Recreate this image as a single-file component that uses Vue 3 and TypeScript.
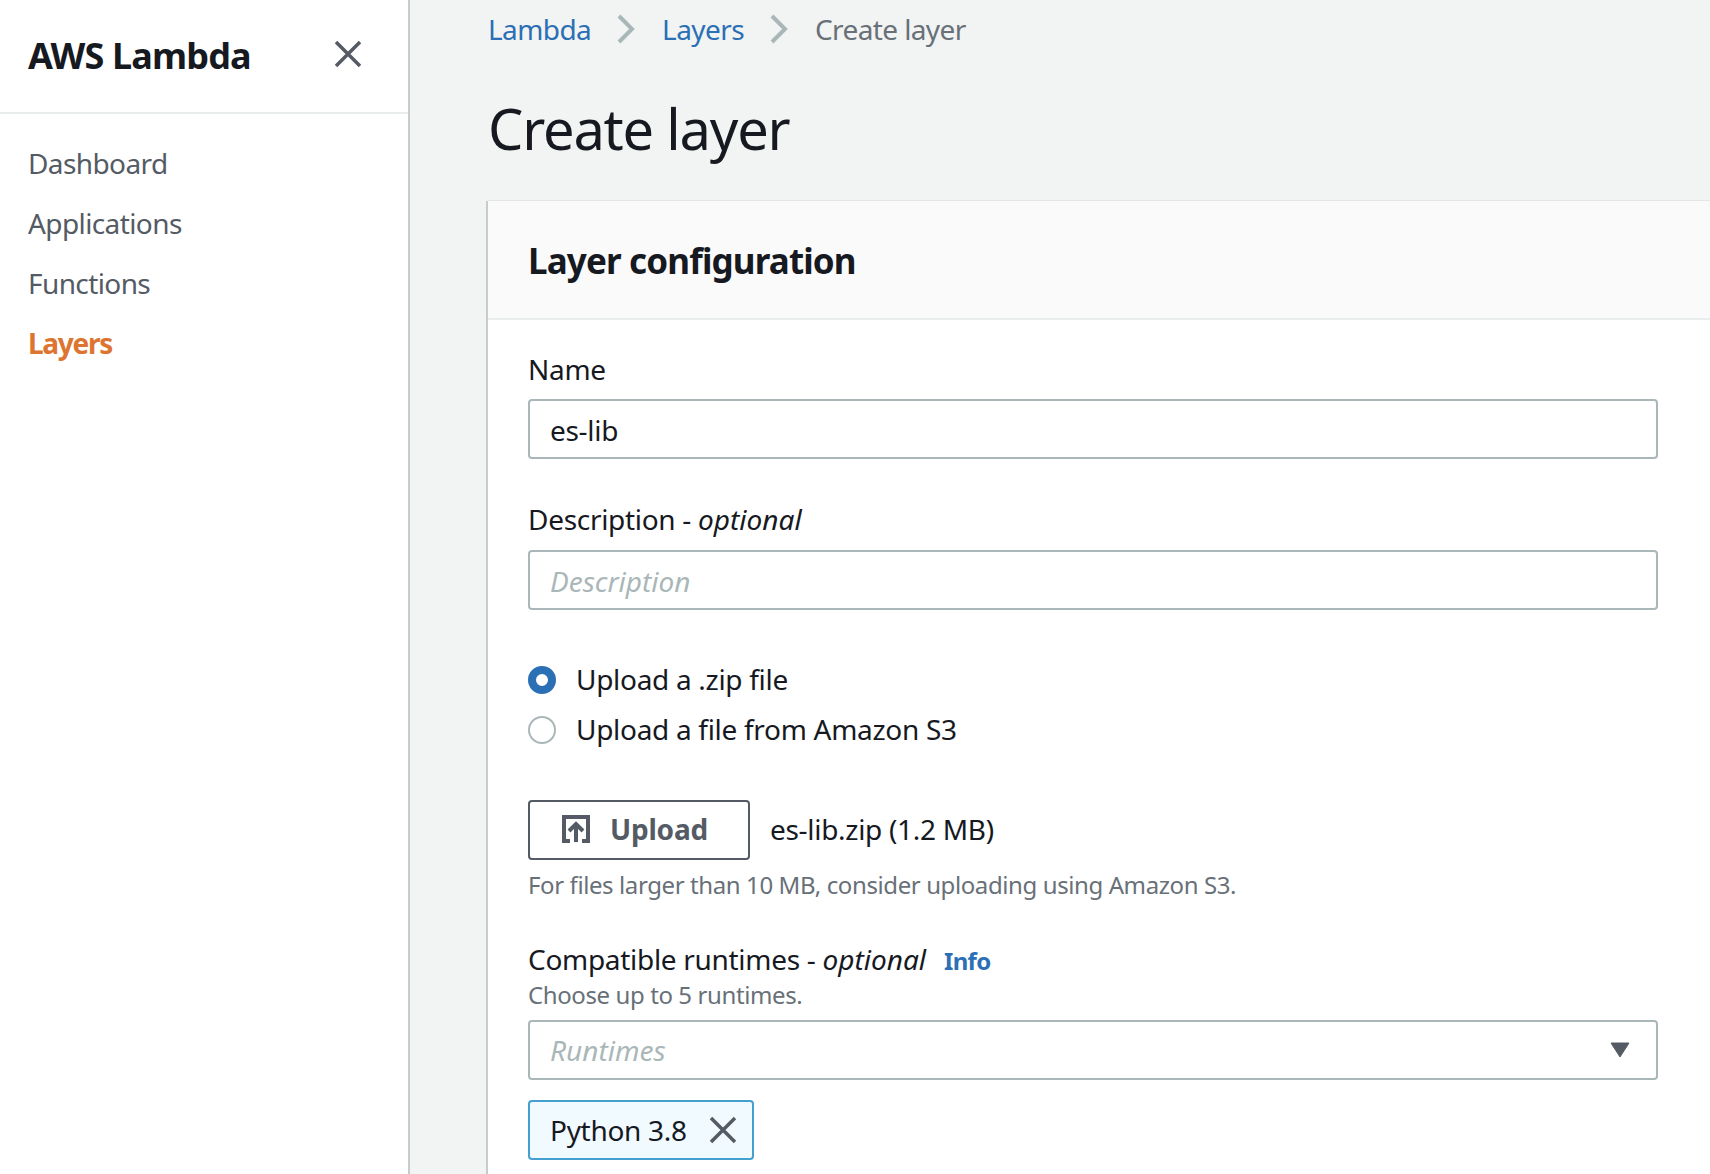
<template>
  <div class="page">
    <aside class="sidebar">
      <div class="side-head">
        <span class="side-title">AWS Lambda</span>
        <svg class="close-icon" width="28" height="28" viewBox="0 0 28 28">
          <path d="M2 2 L26 26 M26 2 L2 26" />
        </svg>
      </div>
      <nav class="side-nav">
        <a v-for="item in navItems" :key="item" class="nav-item" :class="{ active: item === 'Layers' }">{{ item }}</a>
      </nav>
    </aside>

    <main class="main">
      <div class="crumbs">
        <a class="link">Lambda</a>
        <svg class="crumb-sep" width="18" height="30" viewBox="0 0 18 30"><path d="M2 2 L15 15 L2 28" /></svg>
        <a class="link">Layers</a>
        <svg class="crumb-sep" width="18" height="30" viewBox="0 0 18 30"><path d="M2 2 L15 15 L2 28" /></svg>
        <span class="crumb-current">Create layer</span>
      </div>
      <h1 class="title">Create layer</h1>

      <section class="card">
        <header class="card-head">Layer configuration</header>
        <div class="card-body">
          <label class="label">Name</label>
          <div class="input">es-lib</div>

          <label class="label second">Description - <em>optional</em></label>
          <div class="input placeholder">Description</div>

          <div class="radios">
            <div class="radio-row">
              <span class="radio checked"></span>
              <span class="radio-text">Upload a .zip file</span>
            </div>
            <div class="radio-row">
              <span class="radio"></span>
              <span class="radio-text">Upload a file from Amazon S3</span>
            </div>
          </div>

          <div class="upload-row">
            <button class="upload-btn">
              <svg width="28" height="28" viewBox="0 0 28 28">
                <path class="upload-frame" d="M8 26 H2 V2 H26 V26 H20" />
                <path class="upload-arrow" d="M14 27 V10 M7 16 L14 9 L21 16" />
              </svg>
              <span>Upload</span>
            </button>
            <span class="file-name">es-lib.zip (1.2 MB)</span>
          </div>
          <p class="hint">For files larger than 10 MB, consider uploading using Amazon S3.</p>

          <label class="label runtimes">Compatible runtimes - <em>optional</em><a class="info">Info</a></label>
          <p class="hint choose">Choose up to 5 runtimes.</p>
          <div class="input placeholder select">
            <span>Runtimes</span>
            <svg width="20" height="16" viewBox="0 0 20 16"><path d="M1 1 H19 L10 15 Z" /></svg>
          </div>

          <div class="chip">
            <span>Python 3.8</span>
            <svg width="28" height="28" viewBox="0 0 28 28"><path d="M2 2 L26 26 M26 2 L2 26" /></svg>
          </div>
        </div>
      </section>
    </main>
  </div>
</template>

<script setup lang="ts">
const navItems: string[] = ['Dashboard', 'Applications', 'Functions', 'Layers']
</script>

<style>
html, body {
  margin: 0;
  background: #f2f3f3;
}
</style>

<style scoped>
.page {
  display: flex;
  height: 1174px;
  overflow: hidden;
  background: #f2f3f3;
  color: #16191f;
  font-family: "Noto Sans", "Open Sans", sans-serif;
  font-size: 28px;
  letter-spacing: -0.6px;
}
.sidebar {
  width: 408px;
  flex: none;
  background: #fff;
  border-right: 2px solid #c6cbcc;
}
.side-head {
  border-bottom: 2px solid #eaeded;
  display: flex;
  align-items: center;
  justify-content: space-between;
  padding: 2px 46px 3px 28px;
  height: 107px;
}
.side-title {
  font-size: 36px;
  font-weight: 700;
  letter-spacing: -0.85px;
}
.close-icon {
  margin-top: -4px;
}
.close-icon path {
  fill: none;
  stroke: #545b64;
  stroke-width: 3.5;
}
.side-nav {
  display: flex;
  flex-direction: column;
  padding-top: 19px;
}
.nav-item {
  height: 60px;
  line-height: 60px;
  padding-left: 28px;
  color: #545b64;
}
.nav-item.active {
  color: #dd7530;
  font-weight: 700;
  letter-spacing: -1.3px;
}
.main {
  flex: 1;
  min-width: 0;
  padding-left: 78px;
  display: flex;
  flex-direction: column;
}
.crumbs {
  display: flex;
  align-items: center;
  height: 58px;
}
.link {
  color: #2b6fb5;
}
.crumb-sep {
  margin: 0 27px 0 26px;
}
.crumb-sep path {
  fill: none;
  stroke: #aab7b8;
  stroke-width: 4;
}
.crumb-current {
  color: #687078;
}
.title {
  margin: 0;
  padding-top: 36px;
  height: 107px;
  font-size: 56px;
  line-height: 68px;
  font-weight: 400;
  letter-spacing: -1.2px;
}
.card {
  flex: 1;
  background: #fff;
  box-shadow: -2px 0 0 #c6cbcc, 0 -1px 0 #e3e6e6;
  letter-spacing: -0.3px;
}
.card-head {
  height: 117px;
  line-height: 119px;
  padding-left: 40px;
  background: #fafafa;
  border-bottom: 2px solid #eaeded;
  font-size: 35px;
  font-weight: 700;
  letter-spacing: -0.85px;
}
.card-body {
  padding: 29px 52px 0 40px;
}
.label {
  display: block;
  height: 40px;
  line-height: 40px;
  margin-bottom: 10px;
}
.label.second {
  margin-top: 40px;
  margin-bottom: 11px;
}
em {
  letter-spacing: 0;
}
.input {
  height: 60px;
  box-sizing: border-box;
  border: 2px solid #aab7b8;
  border-radius: 4px;
  padding: 0 20px;
  line-height: 58px;
  background: #fff;
}
.placeholder {
  color: #aab7b8;
  font-style: italic;
  letter-spacing: 0;
}
.radios {
  margin-top: 45px;
}
.radio-row {
  display: flex;
  align-items: center;
  gap: 20px;
  height: 50px;
}
.radio {
  width: 28px;
  height: 28px;
  box-sizing: border-box;
  border: 2px solid #aab7b8;
  border-radius: 50%;
}
.radio.checked {
  border: 8px solid #2b6fb5;
}
.radio-text {
  margin-top: -2px;
}
.upload-row {
  display: flex;
  align-items: center;
  gap: 20px;
  margin-top: 45px;
}
.file-name {
  margin-top: -2px;
}
.upload-btn {
  display: flex;
  align-items: center;
  gap: 20px;
  width: 222px;
  height: 60px;
  padding: 0 0 2px 32px;
  background: #fff;
  border: 2px solid #545b64;
  border-radius: 4px;
  color: #545b64;
  font: inherit;
  font-weight: 700;
  letter-spacing: -0.2px;
}
.upload-frame {
  fill: none;
  stroke: #545b64;
  stroke-width: 4;
}
.upload-arrow {
  fill: none;
  stroke: #545b64;
  stroke-width: 4;
}
.hint {
  margin: 4px 0 0;
  height: 42px;
  line-height: 42px;
  color: #687078;
  font-size: 24px;
  letter-spacing: -0.4px;
}
.label.runtimes {
  margin-top: 33px;
  margin-bottom: 0;
}
.info {
  margin-left: 18px;
  color: #2b6fb5;
  font-size: 24px;
  font-weight: 700;
  letter-spacing: -0.7px;
}
.hint.choose {
  margin: 1px 0 10px;
  height: 30px;
  line-height: 30px;
}
.select {
  display: flex;
  align-items: center;
  justify-content: space-between;
  padding-right: 26px;
}
.select path {
  fill: #545b64;
  stroke: #545b64;
  stroke-width: 1;
  stroke-linejoin: round;
}
.chip {
  display: inline-flex;
  align-items: center;
  gap: 22px;
  height: 60px;
  box-sizing: border-box;
  margin-top: 20px;
  padding: 0 15px 0 20px;
  background: #f1faff;
  border: 2px solid #44a1cf;
  border-radius: 4px;
}
.chip path {
  fill: none;
  stroke: #545b64;
  stroke-width: 3.5;
}
</style>
